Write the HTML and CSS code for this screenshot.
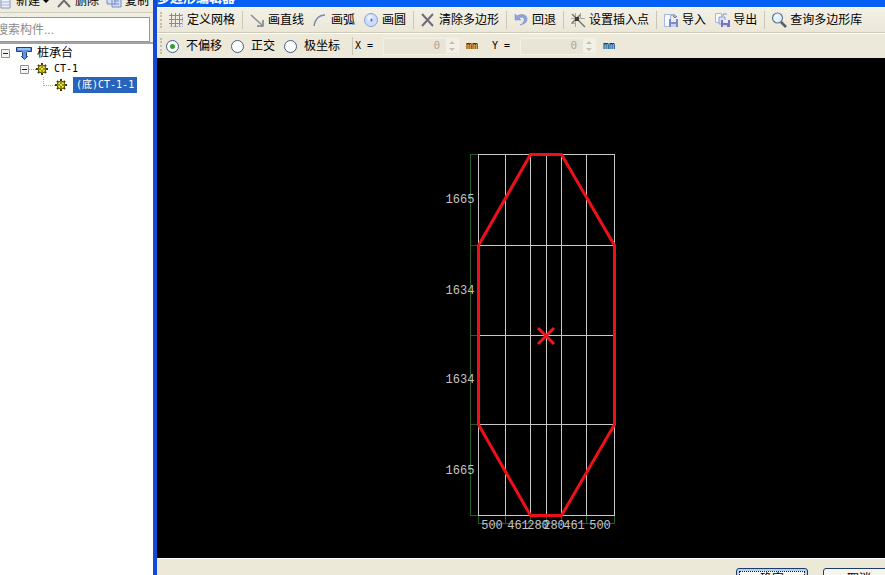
FILE: index.html
```html
<!DOCTYPE html>
<html lang="zh-CN">
<head>
<meta charset="utf-8">
<title>多边形编辑器</title>
<link rel="stylesheet" href="styles.css">
</head>
<body>
<div class="app">
  <aside class="side">
    <div class="side-tools">
      <button class="tool" type="button"><svg class="icon" viewBox="0 0 16 16"><path d="M4 1h9v14H4z" fill="#eef2fc" stroke="#8494c4"/><path d="M4 9h9M4 12h9" stroke="#9fb0dc"/></svg>新建 <span class="caret"></span></button>
      <button class="tool" type="button"><svg class="icon" viewBox="0 0 16 16"><path d="M3 2l11 12M13 2L2 14" stroke="#6d6a72" stroke-width="2" fill="none"/></svg>删除</button>
      <button class="tool" type="button"><svg class="icon" viewBox="0 0 16 16"><path d="M1 1h8v10H1zM6 4h9v10H6z" fill="#cfdcf8" stroke="#7a8dc4"/><path d="M8 8h5M8 11h5" stroke="#7a8dc4"/></svg>复制</button>
    </div>
    <div class="search"><input type="text" aria-label="搜索构件" placeholder="搜索构件..."></div>
    <ul class="tree">
      <li class="node"><svg class="box" viewBox="0 0 9 9"><path d="M.5.5h8v8h-8z" fill="#f6f4ee" stroke="#8c9099"/><path d="M2 4.500h5" stroke="#222"/></svg>
        <svg class="pile" viewBox="0 0 18 16"><path d="M1.500 2.500h15v4h-4l-1 1v4h1l-3 3-3-3h1v-4l-1-1h-5z" fill="#5f96dc" stroke="#1c3c84"/><path d="M3 4h12" stroke="#d5e8ff"/></svg><span class="name">桩承台</span></li>
      <li class="node level2"><svg class="box" viewBox="0 0 9 9"><path d="M.5.5h8v8h-8z" fill="#f6f4ee" stroke="#8c9099"/><path d="M2 4.500h5" stroke="#222"/></svg><span class="dots"></span>
        <svg class="gear" viewBox="0 0 12 12"><path d="M6 0v12M0 6h12M2 2l8 8M10 2l-8 8" stroke="#3c3804" stroke-width="2"/><circle cx="6" cy="6" r="4" fill="#e8dc28" stroke="#5c5408"/><path d="M6 3v6M3 6h6" stroke="#4c4804"/><circle cx="6" cy="6" r="1" fill="#ffffa0"/></svg><span class="name">CT-1</span></li>
      <li class="node level3"><span class="elbow"></span>
        <svg class="gear" viewBox="0 0 12 12"><path d="M6 0v12M0 6h12M2 2l8 8M10 2l-8 8" stroke="#3c3804" stroke-width="2"/><circle cx="6" cy="6" r="4" fill="#e8dc28" stroke="#5c5408"/><path d="M6 3v6M3 6h6" stroke="#4c4804"/><circle cx="6" cy="6" r="1" fill="#ffffa0"/></svg><span class="name selected">(底)CT-1-1</span></li>
    </ul>
  </aside>
  <main class="window">
    <header class="title"><h1>多边形编辑器</h1></header>
    <div class="bar">
      <span class="grip"></span>
      <button class="tool" type="button"><svg class="icon" viewBox="0 0 16 16"><path d="M3.500 1v14M7.500 1v14M11.500 1v14M1 3.500h14M1 7.500h14M1 11.500h14" stroke="#8286b4" fill="none"/><path d="M14.500 2v13M2 14.500h13" stroke="#a9add2" stroke-dasharray="2 1"/></svg>定义网格</button>
      <span class="sep"></span>
      <button class="tool" type="button"><svg class="icon" viewBox="0 0 16 16"><path d="M2 3l11 10" stroke="#8c8c9c" stroke-width="1.500"/><path d="M14 8v6H8" stroke="#7c7c90" stroke-width="1.500" fill="none"/></svg>画直线</button>
      <button class="tool" type="button"><svg class="icon" viewBox="0 0 16 16"><path d="M2 14C3 8 6 3 13 3" stroke="#7f84ac" stroke-width="1.500" fill="none"/></svg>画弧</button>
      <button class="tool" type="button"><svg class="icon" viewBox="0 0 16 16"><circle cx="8" cy="8" r="6.500" fill="#cddcfb" stroke="#8c9fd6"/><circle cx="7" cy="6" r="3" fill="#e6efff"/><path d="M7 8h3M8.500 6.500v3" stroke="#5d73be"/></svg>画圆</button>
      <span class="sep"></span>
      <button class="tool" type="button"><svg class="icon" viewBox="0 0 16 16"><path d="M2 2l11 12M13 2L2 14" stroke="#716c78" stroke-width="2" fill="none"/></svg>清除多边形</button>
      <span class="sep"></span>
      <button class="tool" type="button"><svg class="icon" viewBox="0 0 16 16"><path d="M2 2v6h6L6 6c3-2 6 0 5 3-1 2-2 3-4 4 5-1 7-3 7-6 0-4-5-6-10-3z" fill="#8fa4dc" stroke="#7188c8" stroke-width=".5"/></svg>回退</button>
      <span class="sep"></span>
      <button class="tool" type="button"><svg class="icon" viewBox="0 0 16 16"><path d="M5.500 1v14M10.500 1v5M1 6.500h14M1 11.500h5" stroke="#a7a7a0" fill="none"/><path d="M2 2l5 5M10 3L2 11M8 8l7 7" stroke="#77776e" stroke-width="1.500" fill="none"/><path d="M5 5h4v4H5z" fill="#3c3c38"/></svg>设置插入点</button>
      <span class="sep"></span>
      <button class="tool" type="button"><svg class="icon" viewBox="0 0 16 16"><path d="M1.500 2.500h6v12h-6z" fill="#f7f9ff" stroke="#a8b6de"/><path d="M6 7h9v8H6z" fill="#7f8bc8"/><path d="M8 7h5v3H8z" fill="#e6ebff"/><path d="M8 12h5v3H8z" fill="#c8cff0"/><path d="M8 3h4v3M10 4l2 2 2-2" stroke="#6377bc" fill="none"/></svg>导入</button>
      <button class="tool" type="button"><svg class="icon" viewBox="0 0 16 16"><path d="M1.500 1.500h6v9h-6z" fill="#f7f9ff" stroke="#a8b6de"/><path d="M5 5h6v7H5z" fill="#d6e2fc" stroke="#8c9cd2"/><path d="M7 8h9v7H7z" fill="#7774b8"/><path d="M9 8h5v3H9z" fill="#e6ebff"/><path d="M9 13h4v2H9z" fill="#d8d5f6"/><path d="M9 4V2h4" stroke="#8794c8" fill="none"/></svg>导出</button>
      <span class="sep"></span>
      <button class="tool" type="button"><svg class="icon" viewBox="0 0 16 16"><circle cx="6.500" cy="6" r="5" fill="#dff3ff" stroke="#667788" stroke-width="1.200"/><path d="M4 5l2-2" stroke="#fff" stroke-width="1.500"/><path d="M10 10l5 5" stroke="#535e70" stroke-width="2.500"/></svg>查询多边形库</button>
    </div>
    <div class="bar options">
      <span class="grip"></span>
      <label class="choice"><input type="radio" name="mode" checked>不偏移</label>
      <label class="choice"><input type="radio" name="mode">正交</label>
      <label class="choice"><input type="radio" name="mode">极坐标</label>
      <span class="sep"></span>
      <label class="axis" for="dx">X =</label>
      <span class="spin"><input id="dx" type="text" value="0" disabled><svg viewBox="0 0 10 14"><path d="M2 5l3-3 3 3zM2 9l3 3 3-3z" fill="#c5c1b2"/></svg></span>
      <span class="unit">mm</span>
      <label class="axis" for="dy">Y =</label>
      <span class="spin"><input id="dy" type="text" value="0" disabled><svg viewBox="0 0 10 14"><path d="M2 5l3-3 3 3zM2 9l3 3 3-3z" fill="#c5c1b2"/></svg></span>
      <span class="unit">mm</span>
    </div>
    <section class="canvas">
      <svg class="drawing" viewBox="0 0 184 390" role="img" aria-label="承台多边形">
        <g fill="none" shape-rendering="crispEdges">
          <path d="M30.500 4v362M30 4.500h8M30 95.500h8M30 185.500h8M30 274.500h8M30 365.500h8M38 373.500h137M38.500 366v8M65.500 366v8M90.500 366v8M106.500 366v8M121.500 366v8M146.500 366v8M174.500 366v8" stroke="#245c24"/>
          <path d="M38.500 4v362M65.500 4v362M90.500 4v362M106.500 4v362M121.500 4v362M146.500 4v362M174.500 4v362M38 4.500h137M38 95.500h137M38 185.500h137M38 274.500h137M38 365.500h137" stroke="#c8c8c8"/>
        </g>
        <path d="M90.500 4.500h31l53 91v179l-53 91h-31l-52-91v-179z" fill="none" stroke="#ee1018" stroke-width="3"/>
        <path d="M98 178l16 16M114 178l-16 16" stroke="#f01820" stroke-width="3"/>
        <g class="dim">
          <text x="20" y="53">1665</text><text x="20" y="144">1634</text><text x="20" y="233">1634</text><text x="20" y="324">1665</text>
          <text x="52" y="379">500</text><text x="78" y="379">461</text><text x="98" y="379">280</text><text x="114" y="379">280</text><text x="134" y="379">461</text><text x="160" y="379">500</text>
        </g>
      </svg>
    </section>
    <footer class="foot">
      <button class="push default" type="button">确定</button>
      <button class="push" type="button">取消</button>
    </footer>
  </main>
</div>
</body>
</html>
```
FILE: styles.css
```css
* { box-sizing: border-box; }
body {
  margin: 0;
  font: 12px/16px "DejaVu Sans Mono", "Noto Sans CJK SC", monospace;
  color: #000;
}
button, input { font: inherit; color: inherit; }
.app { display: flex; height: 100vh; overflow: hidden; background: #fff; }

.side { flex: 0 0 153px; overflow: hidden; }
.side-tools {
  display: flex;
  height: 13px;
  overflow: hidden;
  background: #eeebdf;
  border-bottom: 1px solid #d0ccbc;
}
.side-tools .tool { margin-top: -8px; height: 18px; padding: 0 5px 0 0; }
.side-tools .tool + .tool { padding-left: 2px; }
.side-tools .tool:first-child { margin-left: -3px; }
.caret { border: 3px solid transparent; border-top-color: #000; border-bottom: 0; }
.search { padding: 4px 3px 0 0; background: #f0ede3; border-bottom: 2px solid #a3a3a3; }
.search input {
  display: block;
  width: 100%;
  height: 25px;
  padding: 0;
  text-indent: -4px;
  font-family: "Liberation Sans", "Noto Sans CJK SC", sans-serif;
  border: 1px solid #7f9db9;
  border-left: 0;
  background: #fff;
}
.search input::placeholder { color: #8a8a8a; opacity: 1; }
.tree { margin: 0; padding: 1px 0 0 1px; list-style: none; font-size: 10px; }
.node { display: flex; align-items: center; height: 16px; white-space: nowrap; }
.level2 { padding-left: 19px; }
.level3 { padding-left: 42px; }
.box { width: 9px; height: 9px; }
.pile { width: 18px; height: 16px; margin: 0 4px 0 5px; }
.gear { width: 12px; height: 12px; margin-right: 6px; }
.dots { width: 7px; border-top: 1px dotted #b0a890; }
.elbow { align-self: flex-start; width: 12px; height: 9px; border: dotted #b0a890; border-width: 0 0 1px 1px; }
.node:first-child .name { font-size: 12px; }
.selected { padding: 0 3px; color: #fff; background: #2864bc; }

.window {
  flex: 1;
  min-width: 0;
  display: flex;
  flex-direction: column;
  border-left: 4px solid #1648d8;
  background: #ece9d8;
}
.title { height: 7px; overflow: hidden; background: #0460f4; }
.title h1 { margin: -10px 0 0; font-size: 13px; line-height: 16px; color: #fff; }
.bar {
  display: flex;
  align-items: center;
  height: 26px;
  padding-left: 3px;
  border-top: 1px solid #fff;
  border-bottom: 1px solid #cfcbbb;
  background: linear-gradient(#f3f0e7, #ebe7d8);
  white-space: nowrap;
}
.grip { width: 2px; height: 16px; margin-right: 2px; border-left: 2px dotted #c2bdab; }
.tool {
  display: flex;
  align-items: center;
  flex: none;
  gap: 3px;
  padding: 0 4px;
  border: 0;
  background: none;
  white-space: nowrap;
}
.icon { width: 16px; height: 16px; flex: none; }
.sep { flex: none; width: 1px; height: 18px; margin: 0 2px 0 3px; background: #cbc7b8; }
.options { height: 25px; border-bottom: 0; background: #ece9da; }
.options .sep { margin-left: 5px; }
.choice { display: flex; align-items: center; gap: 7px; margin: 0 7px 0 2px; }
.choice input {
  appearance: none;
  width: 13px;
  height: 13px;
  margin: 0;
  border: 1px solid #3f5f88;
  border-radius: 50%;
  background: #fff;
}
.choice input:checked { background: radial-gradient(circle, #2ea02e 0 2px, #fff 3px); }
.axis, .unit { font-size: 10px; white-space: pre; }
.axis { width: 28px; }
.spin {
  display: flex;
  align-items: center;
  width: 76px;
  height: 17px;
  border: 1px solid #f3f0e6;
  background: #e9e5d6;
}
.spin input {
  flex: 1;
  min-width: 0;
  padding: 0 6px 0 0;
  border: 0;
  background: none;
  color: #aaa696;
  font-size: 11px;
  text-align: right;
}
.spin svg { width: 12px; height: 14px; background: #f3f0e6; }
.unit { width: 26px; margin-left: 7px; }

.canvas { flex: 1; min-height: 0; overflow: hidden; background: #000; }
.drawing { display: block; width: 184px; height: 390px; margin: 92px 0 0 283px; }
.dim text {
  font: 12px "Liberation Mono", monospace;
  fill: #c4c4c4;
  text-anchor: middle;
}
.foot {
  display: flex;
  justify-content: flex-end;
  gap: 15px;
  height: 17px;
  padding-top: 9px;
  margin-right: -10px;
  overflow: hidden;
  border-top: 1px solid #fff;
}
.push {
  flex: none;
  width: 72px;
  height: 22px;
  padding: 0;
  border: 1px solid #1c3c6c;
  border-radius: 3px;
  background: #f6f5f0;
}
.default { box-shadow: inset 0 0 0 2px #b8d0f0; outline: 1px dotted #222; outline-offset: -4px; }
```
